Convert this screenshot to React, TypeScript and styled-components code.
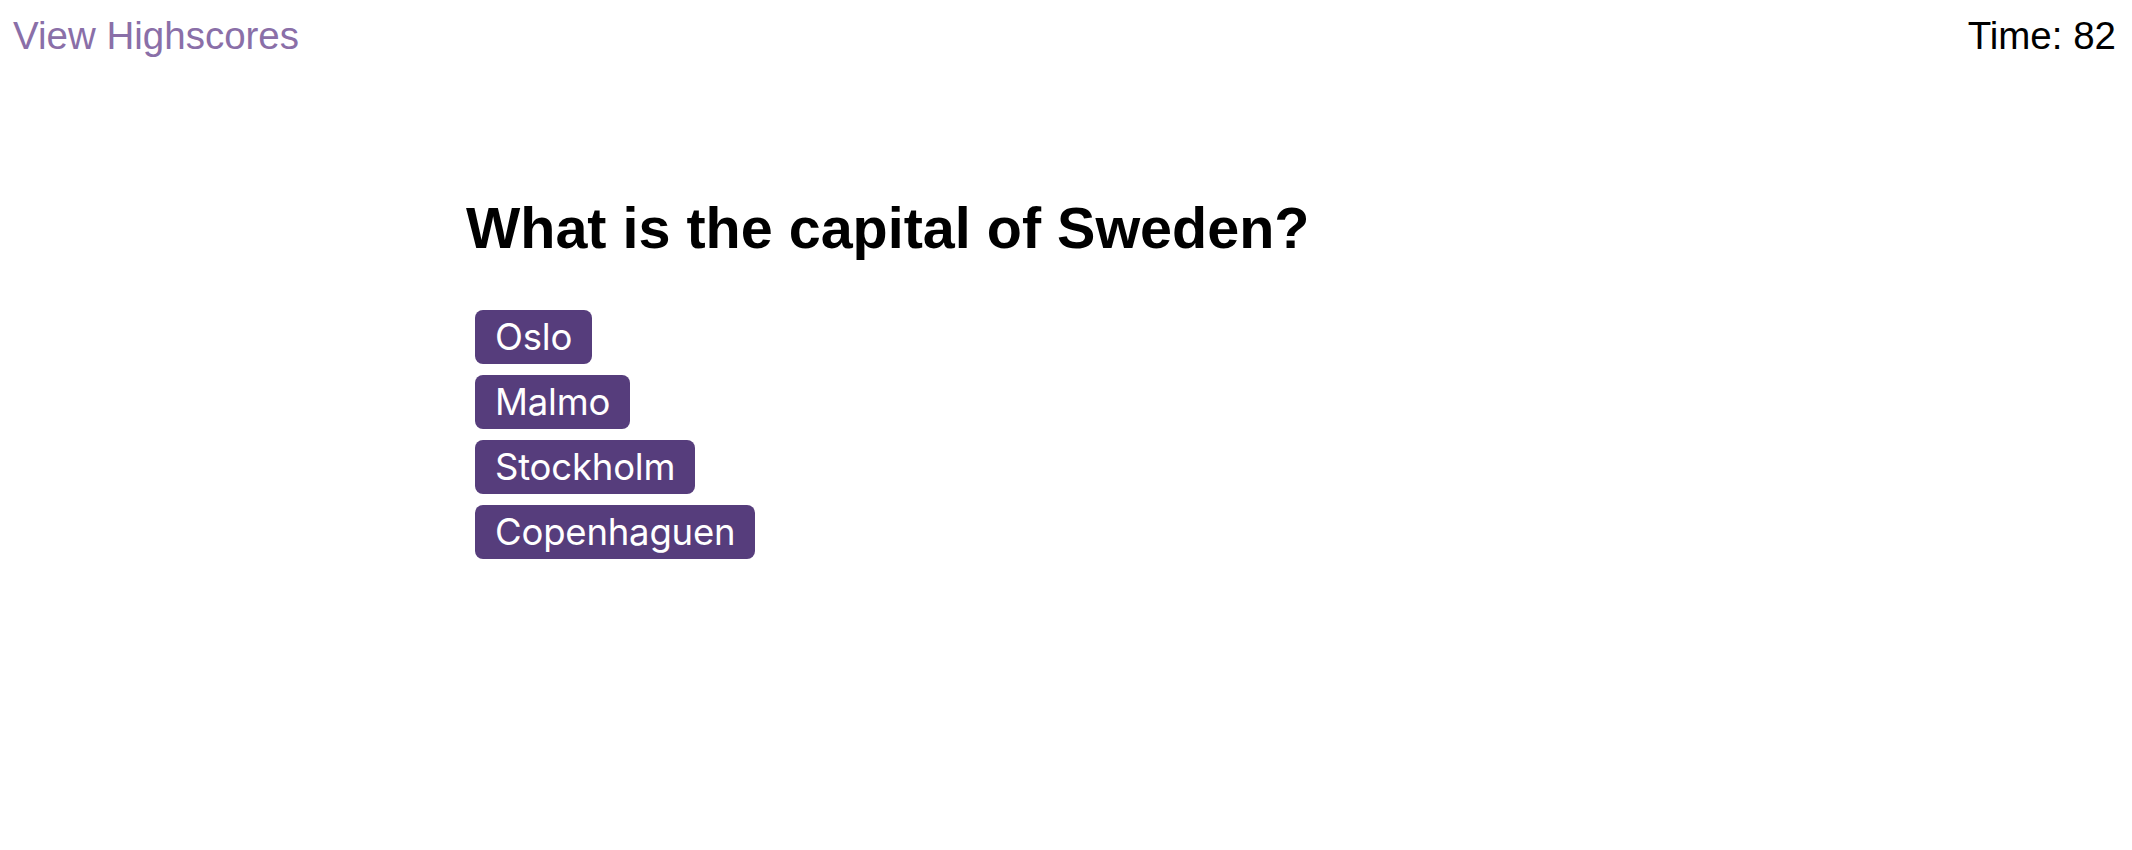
import React from "react";
import styled, { createGlobalStyle } from "styled-components";

const GlobalStyle = createGlobalStyle`
  html, body {
    margin: 0;
    padding: 0;
    background: #ffffff;
  }
  body {
    font-family: "Liberation Sans", Arial, Helvetica, sans-serif;
    color: #000000;
  }
`;

const Page = styled.div`
  width: 100%;
  min-height: 850px;
  display: flex;
  flex-direction: column;
`;

const Header = styled.header`
  display: flex;
  justify-content: space-between;
  align-items: flex-start;
  padding: 14px 16px 0 13px;
  font-size: 38.5px;
  line-height: normal;
`;

const HighscoreLink = styled.a`
  color: #8a6fa8;
  text-decoration: none;
  cursor: pointer;
`;

const Timer = styled.div`
  color: #000000;
`;

const Main = styled.main`
  width: 1200px;
  margin: 137px auto 0;
  display: flex;
  flex-direction: column;
`;

const Question = styled.h1`
  margin: 0;
  font-family: "Liberation Sans", Arial, sans-serif;
  font-weight: 700;
  font-size: 57.5px;
  line-height: normal;
`;

const Choices = styled.div`
  margin-top: 49px;
  padding-left: 9px;
  display: flex;
  flex-direction: column;
  align-items: flex-start;
  gap: 11px;
`;

const Choice = styled.button`
  height: 54px;
  padding: 0 20px;
  border: none;
  border-radius: 8px;
  background: #563d7c;
  color: #ffffff;
  font-family: Inter, "Noto Sans", sans-serif;
  font-size: 36.5px;
  letter-spacing: -0.2px;
  line-height: 54px;
  cursor: pointer;
`;

const answers = ["Oslo", "Malmo", "Stockholm", "Copenhaguen"];

export default function App() {
  return (
    <>
      <GlobalStyle />
      <Page>
        <Header>
          <HighscoreLink>View Highscores</HighscoreLink>
          <Timer>Time: 82</Timer>
        </Header>
        <Main>
          <Question>What is the capital of Sweden?</Question>
          <Choices>
            {answers.map((a) => (
              <Choice key={a}>{a}</Choice>
            ))}
          </Choices>
        </Main>
      </Page>
    </>
  );
}
